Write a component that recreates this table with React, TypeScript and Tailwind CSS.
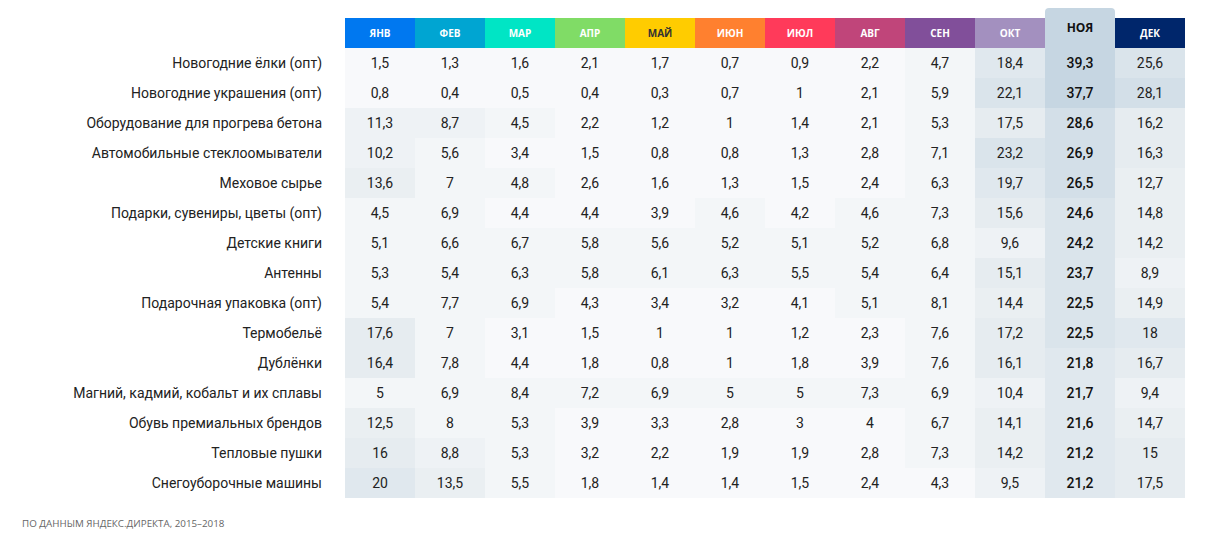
const months = [
  { name: 'ЯНВ', bg: 'bg-[#0078f0]', text: 'text-white' },
  { name: 'ФЕВ', bg: 'bg-[#00a5d2]', text: 'text-white' },
  { name: 'МАР', bg: 'bg-[#00e5c5]', text: 'text-white' },
  { name: 'АПР', bg: 'bg-[#80dc66]', text: 'text-white' },
  { name: 'МАЙ', bg: 'bg-[#ffcc00]', text: 'text-[#333333]' },
  { name: 'ИЮН', bg: 'bg-[#ff802f]', text: 'text-white' },
  { name: 'ИЮЛ', bg: 'bg-[#ff3a5a]', text: 'text-white' },
  { name: 'АВГ', bg: 'bg-[#c0457a]', text: 'text-white' },
  { name: 'СЕН', bg: 'bg-[#814f9a]', text: 'text-white' },
  { name: 'ОКТ', bg: 'bg-[#a390bf]', text: 'text-white' },
  { name: 'НОЯ', bg: 'bg-[#c6d6e2]', text: 'text-[#111111]' },
  { name: 'ДЕК', bg: 'bg-[#00266b]', text: 'text-white' },
]

const rows: Array<{ label: string; values: string[] }> = [
  { label: 'Новогодние ёлки (опт)', values: ['1,5', '1,3', '1,6', '2,1', '1,7', '0,7', '0,9', '2,2', '4,7', '18,4', '39,3', '25,6'] },
  { label: 'Новогодние украшения (опт)', values: ['0,8', '0,4', '0,5', '0,4', '0,3', '0,7', '1', '2,1', '5,9', '22,1', '37,7', '28,1'] },
  { label: 'Оборудование для прогрева бетона', values: ['11,3', '8,7', '4,5', '2,2', '1,2', '1', '1,4', '2,1', '5,3', '17,5', '28,6', '16,2'] },
  { label: 'Автомобильные стеклоомыватели', values: ['10,2', '5,6', '3,4', '1,5', '0,8', '0,8', '1,3', '2,8', '7,1', '23,2', '26,9', '16,3'] },
  { label: 'Меховое сырье', values: ['13,6', '7', '4,8', '2,6', '1,6', '1,3', '1,5', '2,4', '6,3', '19,7', '26,5', '12,7'] },
  { label: 'Подарки, сувениры, цветы (опт)', values: ['4,5', '6,9', '4,4', '4,4', '3,9', '4,6', '4,2', '4,6', '7,3', '15,6', '24,6', '14,8'] },
  { label: 'Детские книги', values: ['5,1', '6,6', '6,7', '5,8', '5,6', '5,2', '5,1', '5,2', '6,8', '9,6', '24,2', '14,2'] },
  { label: 'Антенны', values: ['5,3', '5,4', '6,3', '5,8', '6,1', '6,3', '5,5', '5,4', '6,4', '15,1', '23,7', '8,9'] },
  { label: 'Подарочная упаковка (опт)', values: ['5,4', '7,7', '6,9', '4,3', '3,4', '3,2', '4,1', '5,1', '8,1', '14,4', '22,5', '14,9'] },
  { label: 'Термобельё', values: ['17,6', '7', '3,1', '1,5', '1', '1', '1,2', '2,3', '7,6', '17,2', '22,5', '18'] },
  { label: 'Дублёнки', values: ['16,4', '7,8', '4,4', '1,8', '0,8', '1', '1,8', '3,9', '7,6', '16,1', '21,8', '16,7'] },
  { label: 'Магний, кадмий, кобальт и их сплавы', values: ['5', '6,9', '8,4', '7,2', '6,9', '5', '5', '7,3', '6,9', '10,4', '21,7', '9,4'] },
  { label: 'Обувь премиальных брендов', values: ['12,5', '8', '5,3', '3,9', '3,3', '2,8', '3', '4', '6,7', '14,1', '21,6', '14,7'] },
  { label: 'Тепловые пушки', values: ['16', '8,8', '5,3', '3,2', '2,2', '1,9', '1,9', '2,8', '7,3', '14,2', '21,2', '15'] },
  { label: 'Снегоуборочные машины', values: ['20', '13,5', '5,5', '1,8', '1,4', '1,4', '1,5', '2,4', '4,3', '9,5', '21,2', '17,5'] },
]

// heatmap steps, lightest first
const shades = [
  'bg-[#f8f9fb]',
  'bg-[#f3f6f8]',
  'bg-[#eef2f5]',
  'bg-[#eaeff2]',
  'bg-[#e6ecf0]',
  'bg-[#e0e8ee]',
  'bg-[#dae4eb]',
  'bg-[#d3dfe8]',
  'bg-[#cbd9e4]',
  'bg-[#c6d6e2]',
]

const shadeFor = (value: string) => {
  const v = parseFloat(value.replace(',', '.'))
  if (v < 4.5) return shades[0]
  if (v < 8.5) return shades[1]
  if (v < 12) return shades[2]
  if (v < 15) return shades[3]
  if (v < 18) return shades[4]
  if (v < 22) return shades[5]
  if (v < 26) return shades[6]
  if (v < 30) return shades[7]
  if (v < 36) return shades[8]
  return shades[9]
}

const App = () => {
  return (
    <div className="w-[1210px] h-[549px] bg-white px-[22px] pt-[8px] text-[#222222] font-['Roboto',sans-serif]">
      <div className="flex items-end font-['Open_Sans',sans-serif]">
        <div className="w-[323px] shrink-0" />
        {months.map((m) => {
          const isNov = m.name === 'НОЯ'
          return (
            <div
              key={m.name}
              className={`w-[70px] shrink-0 flex items-center justify-center font-bold ${m.bg} ${m.text} ${
                isNov ? 'h-[40px] rounded-t-[4px] text-[12px]' : 'h-[30px] text-[10px]'
              }`}
            >
              {m.name}
            </div>
          )
        })}
      </div>
      {rows.map((row) => (
        <div key={row.label} className="flex h-[30px]">
          <div className="w-[323px] shrink-0 pr-[23px] flex items-center justify-end text-[14px] whitespace-nowrap">
            {row.label}
          </div>
          {row.values.map((v, i) => (
            <div
              key={i}
              className={`w-[70px] shrink-0 flex items-center justify-center text-[14px] ${shadeFor(v)} ${
                i === 10 ? 'font-medium text-[#111111]' : ''
              }`}
            >
              {v}
            </div>
          ))}
        </div>
      ))}
      <div className="mt-[19px] text-[9.8px] uppercase text-[#666666] font-['Open_Sans',sans-serif]">
        По данным Яндекс.Директа, 2015–2018
      </div>
    </div>
  )
}

export default App
